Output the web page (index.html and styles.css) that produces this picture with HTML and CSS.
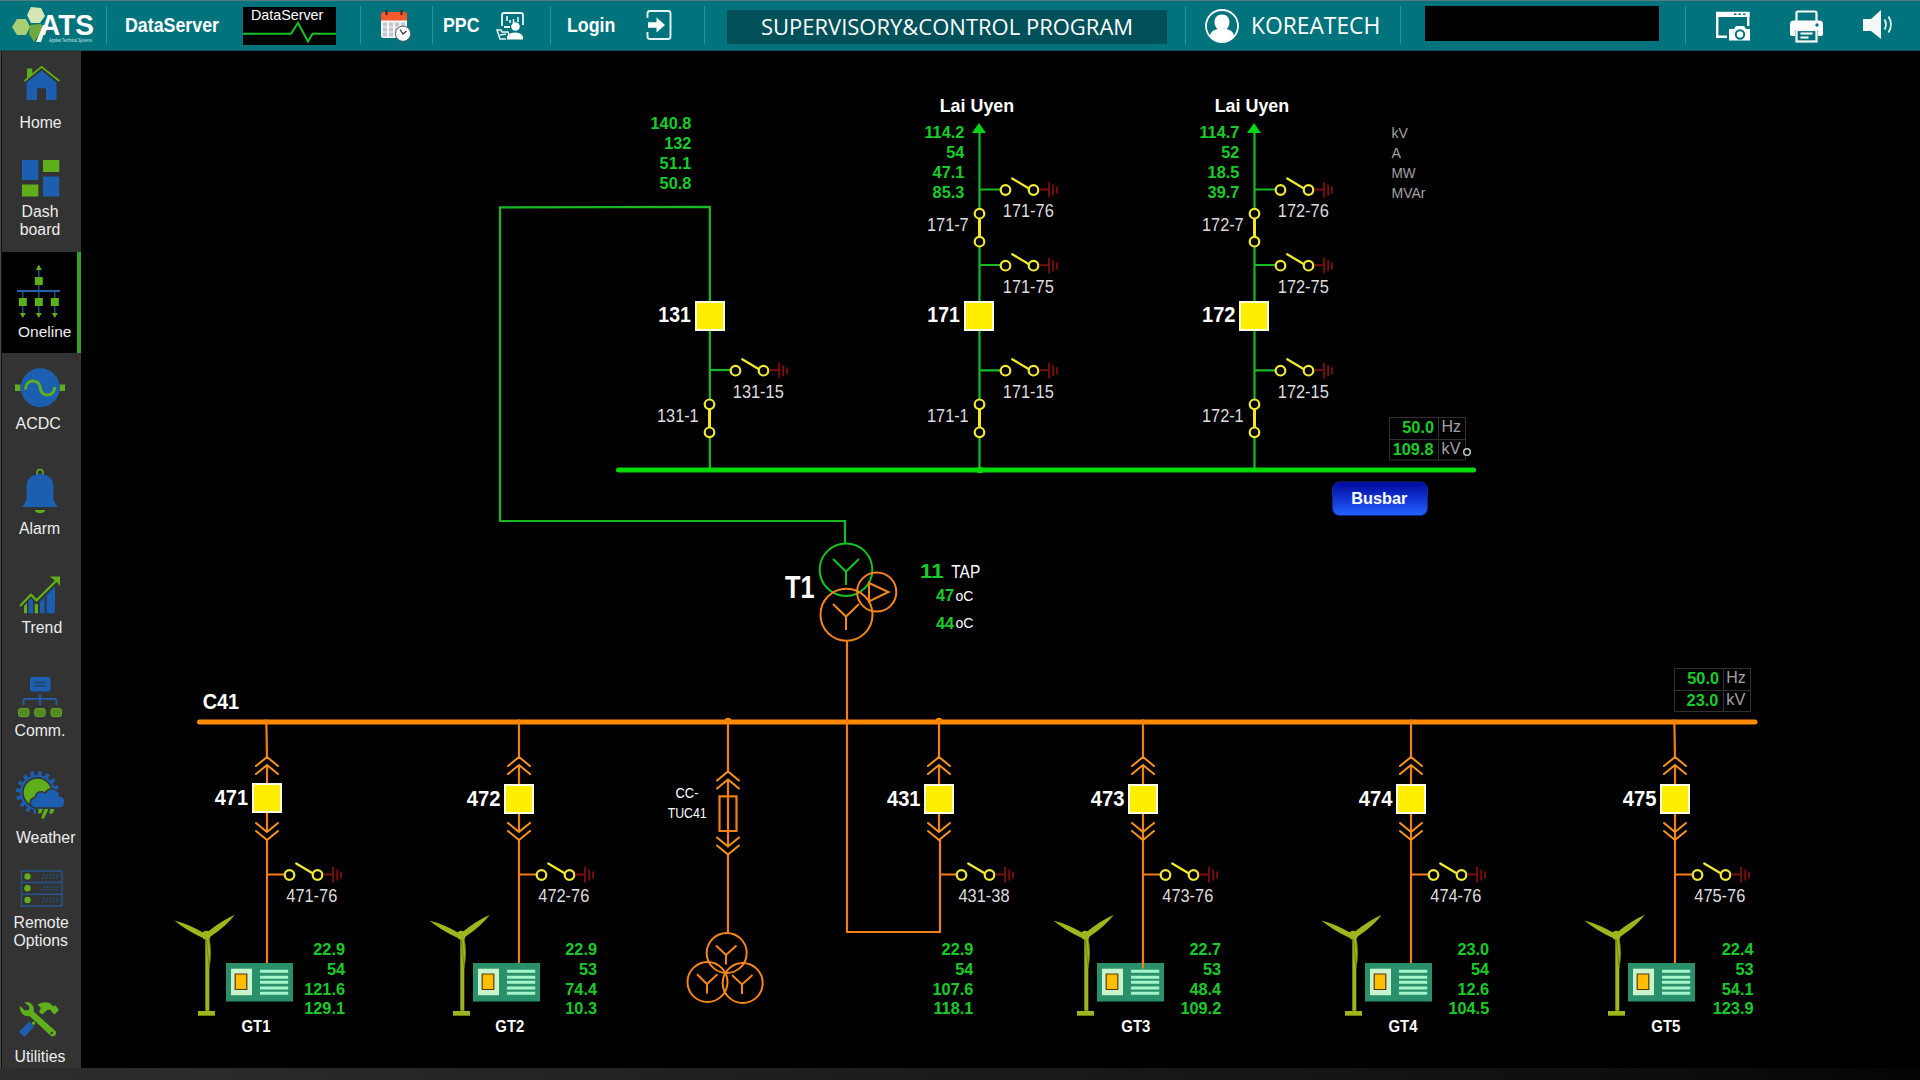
FILE: index.html
```html
<!DOCTYPE html>
<html lang="en">
<head>
<meta charset="utf-8">
<title>Supervisory &amp; Control Program</title>
<link rel="stylesheet" href="styles.css">
</head>
<body>
<header class="topbar">
  <div class="seg seg-logo">
    <svg width="106" height="49" viewBox="0 1 106 49">
      <path fill="#d3e8b4" d="M31 7l10 1 4 8-5 7-9 0-4-8z"/>
      <path fill="#a9cf74" d="M17 19l9 0 4 8-4 8-9 0-5-8z"/>
      <path fill="#6ea93d" d="M30 25l11-1 3 3-10 15-5-8z"/>
      <path fill="#eef7e4" d="M36 42l7-17 4 0-6 17z"/>
      <text class="logo-name" x="40" y="35.300" textLength="54" lengthAdjust="spacingAndGlyphs">ATS</text>
      <text class="logo-sub" x="49" y="42" textLength="43" lengthAdjust="spacingAndGlyphs">Applied Technical Systems</text>
    </svg>
  </div>
  <div class="seg seg-data">
    <span class="label">DataServer</span>
    <div class="monitor">
      <span>DataServer</span>
      <svg width="93" height="22" viewBox="243 22 93 22"><path class="pulse" d="M243 33.700H291L298 23 308 41.500 312.600 33.700H336"/></svg>
    </div>
  </div>
  <div class="seg seg-cal">
    <svg width="32" height="34" viewBox="380 9 32 34">
      <rect x="381" y="13" width="26" height="25" rx="2" fill="#f4f4f6"/>
      <path fill="#f4592d" d="M381 20.500V14q0-2 2-2h22q2 0 2 2v6.500z"/>
      <path stroke="#3a2b2b" stroke-width="2" d="M386.500 10v5M401.500 10v5"/>
      <path stroke="#c3c5cf" stroke-width="3.800" stroke-dasharray="4 2" d="M383 24.500h22M383 29.500h22M383 34.500h22"/>
      <circle cx="403" cy="33.700" r="7.600" fill="#fff" stroke="#555b66" stroke-width="1"/>
      <path fill="none" stroke="#333" stroke-width="1.300" d="M400 29.500l3 4.500 3.500-3"/>
    </svg>
  </div>
  <div class="seg seg-ppc">
    <span class="label">PPC</span>
    <svg width="30" height="30" viewBox="495 11 30 30">
      <path fill="none" stroke="#e9f6f6" stroke-width="1.800" d="M502 26V15q0-2 2-2h17q2 0 2 2v10M504 27h6"/>
      <path stroke="#e9f6f6" stroke-width="1.600" d="M507 16v5M510 20v3M513.500 19v4M518 17v5"/>
      <circle cx="515.500" cy="26.500" r="4.300" fill="#fff"/>
      <path fill="#fff" d="M507 39.500v-3q2-4 8-4t8 4v3z"/>
      <path fill="none" stroke="#e9f6f6" stroke-width="1.500" d="M506 39h-6l-3-9h4l1 2h6l2 6M500 35l6-1"/>
    </svg>
  </div>
  <div class="seg seg-login">
    <span class="label">Login</span>
    <svg width="26" height="32" viewBox="646 9 26 32">
      <path fill="none" stroke="#e6f4f4" stroke-width="1.900" d="M647.500 18v-4.500q0-2.500 2.500-2.500h18q2.500 0 2.500 2.500v23q0 2.500-2.500 2.500h-18q-2.500 0-2.500-2.500V32"/>
      <path fill="#fff" d="M648 22.300h8.500V17.500l8.500 7.500-8.500 7.500v-4.800H648z"/>
    </svg>
  </div>
  <div class="seg seg-title"><div class="title"><span>SUPERVISORY&amp;CONTROL PROGRAM</span></div></div>
  <div class="seg seg-user">
    <svg width="36" height="36" viewBox="1204 8 36 36">
      <circle cx="1222" cy="26" r="16" fill="none" stroke="#fff" stroke-width="1.800"/>
      <path fill="#fff" d="M1222 14.500c5 0 7.500 3.500 7.500 7.500 0 3-1.300 5.500-3 7 4 1 7 3 7.500 6.500-2.500 4-7 6.500-12 6.500s-9.500-2.500-12-6.500c.5-3.500 3.500-5.500 7.500-6.500-1.700-1.500-3-4-3-7 0-4 2.500-7.500 7.500-7.500z"/>
    </svg>
    <span class="user">KOREATECH</span>
  </div>
  <div class="seg seg-box"><div class="blank"></div></div>
  <div class="seg seg-tools">
    <svg width="36" height="32" viewBox="1715 10 36 32">
      <path fill="none" stroke="#fff" stroke-width="2.400" d="M1727 36.800h-9.800V13h31v13"/>
      <path fill="#fff" d="M1716 12h33.500v5H1716z"/>
      <path stroke="#00707a" stroke-width="1.500" d="M1734 14.300h2.500M1738.500 14.300h2.500M1743 14.300h2.500"/>
      <path fill="#fff" d="M1729 29h5l2-3h8l2 3h4v11.500H1729z"/>
      <circle cx="1740" cy="34.500" r="4.200" fill="#fff" stroke="#00707a" stroke-width="2"/>
    </svg>
    <svg width="34" height="34" viewBox="1789.500 9 34 34">
      <path fill="none" stroke="#fff" stroke-width="2.200" d="M1796 20v-8q0-1.500 1.500-1.500h17q1.500 0 1.500 1.500V20"/>
      <path fill="#fff" d="M1793 19.500h26q3.500 0 3.500 3.500v10q0 2-2 2h-3v-6h-23v6h-3q-2 0-2-2V23q0-3.500 3.500-3.500z"/>
      <rect x="1796" y="29" width="20" height="11.500" fill="#00707a" stroke="#fff" stroke-width="2.200"/>
      <path stroke="#fff" stroke-width="1.800" d="M1800 32.500h12M1800 36.500h8"/>
      <circle cx="1816.500" cy="24" r="1.700" fill="#00707a"/>
    </svg>
    <svg width="32" height="32" viewBox="1862 9 32 32">
      <path fill="#f2f8f8" d="M1863 18h8l10-9v29l-10-8h-8z"/>
      <path fill="none" stroke="#e5f3f3" stroke-width="1.800" d="M1884.500 18.500q3 5 0 10M1888.500 15.500q5 8 0 16"/>
    </svg>
  </div>
</header>

<div class="body">
<nav class="sidebar">
  <a class="item home">
    <svg width="79" height="63" viewBox="2 51 79 63">
      <path class="g" d="M27 68.500h5.300v6L27 78.500z"/>
      <path class="b" d="M41.500 70.500L56.500 82.500V100H46V88.300H37V100H26.500V82.500z"/>
      <path fill="none" stroke="#5fae1c" stroke-width="1.800" d="M24.300 81L41.500 66.800 59.300 81"/>
    </svg>
    <span>Home</span>
  </a>
  <a class="item dash">
    <svg width="79" height="72" viewBox="2 131 79 72">
      <path class="b" d="M22 160h16.300v20H22zM43 176.500h16.300v20H43z"/>
      <path class="g" d="M43 160h16.300v12H43zM22 184.500h16.300v12H22z"/>
    </svg>
    <span>Dash<br>board</span>
  </a>
  <a class="item oneline">
    <svg width="75" height="71" viewBox="2 252 75 71">
      <path fill="none" stroke="#2161ad" stroke-width="1.200" d="M38.800 268v23M22.800 291v24M38.800 291v24M54.800 291v24"/>
      <path fill="none" stroke="#2161ad" stroke-width="2.200" d="M17 291h43"/>
      <path class="g" d="M38.800 264.500l3 5.500h-6zM34.800 277h8v8h-8zM18.800 298h8v8h-8zM34.800 298h8v8h-8zM50.800 298h8v8h-8zM19.800 313h6l-3 5zM35.800 313h6l-3 5zM51.800 313h6l-3 5z"/>
    </svg>
    <span>Oneline</span>
  </a>
  <a class="item acdc">
    <svg width="79" height="62" viewBox="2 353 79 62">
      <path class="g" d="M15 384.500h5.500v6.500H15zM59.500 384.500H65v6.500h-5.500z"/>
      <circle class="b" cx="40.300" cy="387.700" r="19.500"/>
      <path fill="none" stroke="#5fae1c" stroke-width="3" d="M25.500 389.500c0-11 14-11 14.800-1.500s14 9.500 14.400-1"/>
    </svg>
    <span>ACDC</span>
  </a>
  <a class="item alarm">
    <svg width="79" height="87" viewBox="2 433 79 87">
      <circle cx="40" cy="472.500" r="3" fill="none" stroke="#5fae1c" stroke-width="1.600"/>
      <path class="b" d="M40 474c9 0 13.500 5.500 13.500 13v9.500c0 5 2 7.500 4.500 10.500H22c2.500-3 4.500-5.500 4.500-10.500V487c0-7.500 4.500-13 13.500-13z"/>
      <path class="g" d="M34.500 510h11q-2 3.200-5.500 3.200t-5.500-3.200z"/>
    </svg>
    <span>Alarm</span>
  </a>
  <a class="item trend">
    <svg width="79" height="81" viewBox="2 538 79 81">
      <path class="g" d="M24 606l3-3v10.300h-3zM34.700 603.500l3.300 1v8.800h-3.300z"/>
      <path class="b" d="M28.500 601l2.500-2.500 2 2v12.800h-4.500zM40 601.500l4.700-4.500v16.300H40zM46.500 595l8.500-8.500v26.800h-8.500z"/>
      <path fill="none" stroke="#5fae1c" stroke-width="2.300" d="M20 606l11-11.300 5.500 5.600L57 580"/>
      <path class="g" d="M49.500 576.500l10.500 0 0 9.500-3-3.500-3.500-3z"/>
    </svg>
    <span>Trend</span>
  </a>
  <a class="item comm">
    <svg width="79" height="85" viewBox="2 637 79 85">
      <rect class="b" x="30" y="677" width="20.500" height="14.500" rx="2"/>
      <path stroke="#24435f" stroke-width="1.300" d="M34.500 682.500h11M34.500 686h11"/>
      <path fill="none" stroke="#2161ad" stroke-width="1.700" d="M40 694.500v11M23.500 705v-4q0-2.200 2.200-2.200h28.600q2.200 0 2.200 2.200v4"/>
      <g fill="#548a22" stroke="#63a329"><rect x="18.500" y="708.500" width="10.500" height="8" rx="2"/><rect x="34.700" y="708.500" width="10.500" height="8" rx="2"/><rect x="51" y="708.500" width="10.500" height="8" rx="2"/></g>
    </svg>
    <span>Comm.</span>
  </a>
  <a class="item weather">
    <svg width="79" height="89" viewBox="2 740 79 89">
      <circle cx="37.500" cy="792.500" r="19.200" fill="none" stroke="#1c5fb0" stroke-width="4.500" stroke-dasharray="3.700 3.840"/>
      <circle cx="37.500" cy="792.500" r="17.600" class="b"/>
      <circle cx="37.500" cy="792.500" r="14.600" class="g" stroke="#333" stroke-width="1.600"/>
      <path class="b" stroke="#333" stroke-width="1.500" d="M36 808c-7 0-8-9-1-10.500 1-6 7-7 10-4.500 5-8 15-3 14.500 3 7.500 0 7 12 0 12z"/>
      <path fill="#333" d="M36 809h28v12H36z"/>
      <path class="g" d="M38.500 809h4.500l-2 4.500h-2.800zM44.500 809h4l-4.500 9.500h-3zM50.500 809h4l-2 4.500h-3.500z"/>
    </svg>
    <span>Weather</span>
  </a>
  <a class="item remote">
    <svg width="79" height="67" viewBox="2 847 79 67">
      <path fill="none" stroke="#24558f" stroke-width="1.400" d="M21.500 871h40.500v35H21.500zM21.500 882.500h40.500M21.500 894.200h40.500"/>
      <path fill="none" stroke="#24558f" stroke-width="1.500" stroke-dasharray="1.700 1.800" d="M43 875h15.500M42 877.700h15.500M43 887h15.500M42 889.700h15.500M43 898.700h15.500M42 901.400h15.500"/>
      <g class="g"><circle cx="27.500" cy="876.500" r="3.200"/><circle cx="27.500" cy="888.200" r="3.200"/><circle cx="27.500" cy="900" r="3.200"/></g>
    </svg>
    <span>Remote<br>Options</span>
  </a>
  <a class="item util">
    <svg width="79" height="98" viewBox="2 950 79 98">
      <path class="b" d="M29 1021.500l5 5-9.500 10.500-5.500-5z"/>
      <path class="g" d="M31.500 1023.500l2-2.500 2 2-2 2.500zM37.500 1004.500q7-3.500 12-1.500l3.500 3 2.500-.5 3.500 4.500-4.500 4.500-3.500-3.500-.5-1.500-3 .5-5.500 4.500-3-2.500 2-4z"/>
      <path class="g" d="M24.500 1002.500q5-1.500 8 2.500 2 3 1 6.500l22 19.500q1.500 2.500-.5 4.500-2.500 2-4.500 0l-21-19.500q-4 1-7-2-3.500-3.500-2.500-8l5 4.500 4-.5 .5-3.500z"/>
      <circle cx="51.700" cy="1033" r="1.200" fill="#333"/>
    </svg>
    <span>Utilities</span>
  </a>
</nav>

<main class="canvas">
<svg width="1839" height="1017" viewBox="81 51 1839 1017">
  <defs>
    <linearGradient id="btn" x1="0" y1="0" x2="0" y2="1">
      <stop offset="0" stop-color="#00079c"/><stop offset=".45" stop-color="#1030cc"/><stop offset="1" stop-color="#2262ff"/>
    </linearGradient>
    <!-- open earthing switch, origin at the first contact -->
    <g id="earth">
      <g class="contact"><circle r="4.800"/><circle cx="28" r="4.800"/><path d="M6.700-11.500L23.500-1.500"/></g>
      <path class="ground" d="M33.500-.5H43.500M43.500-8V7.500M47.700-5.500V5.500M51.500-3.500V3.500"/>
    </g>
    <!-- closed isolator, origin at the upper contact -->
    <g id="isolator">
      <g class="contact"><circle r="4.800" fill="#000"/><circle cy="28" r="4.800" fill="#000"/></g>
      <path stroke="#f5e61e" stroke-width="3" d="M0 5V23"/>
    </g>
    <rect id="breaker" x="-14" y="1" width="28" height="28" fill="#ffee00" stroke="#fffbe0" stroke-width="2"/>
    <path id="up" class="chev" d="M-11 9L0 0 11 9M-11 17L0 8 11 17"/>
    <path id="down" class="chev" d="M-11 0L0 9 11 0M-11 8L0 17 11 8"/>
    <path id="wye" fill="none" d="M-13-12.500L0 0 13-12.500M0 0V13.500"/>
    <g id="turbine" fill="#a0b41b">
      <path d="M-1 4h4v71.500h-4z"/><path d="M-8.300 75.700H8.700v4.700H-8.300z"/>
      <path d="M-32-14.800Q-17-11-2-2L-4 2.500Q-20-5-32-14.800z"/>
      <path d="M28.500-20.500Q14-14 1-3L4 1.500Q20-9 28.500-20.500z"/>
      <path stroke="#59650c" stroke-width=".6" d="M0 3L3 33Q6 17 3 3z"/>
      <circle r="4.500"/>
    </g>
    <g id="inverter">
      <path fill="#2a8f6b" d="M0 0h67v38.500H0z"/>
      <path fill="#c9f5cd" d="M5 5.700h21v26.500H5z"/>
      <path fill="#ffbe00" stroke="#5a3510" stroke-width="1.200" d="M9.200 11h11.600v15.500H9.200z"/>
      <path stroke="#a5f5cb" stroke-width="3" d="M34 8.300h28.200M34 14.300h28.200M34 19.300h28.200M34 25h28.200M34 30.300h28.200"/>
    </g>
  </defs>

  <!-- 110 kV side -->
  <g class="wire green">
    <path d="M709.800 470V206.800L500 207.300V521H845V544"/>
    <path d="M709.800 370H731"/>
    <path d="M979.500 131V470M980 189.500h21M980 265h21M980 370.300h21"/>
    <path d="M1254.500 131V470M1255 189.500h21M1255 265h21M1255 370.300h21"/>
  </g>
  <path fill="#00d414" d="M979 123l7 10h-14zM1254 123l7 10h-14z"/>
  <path class="bus" stroke="#00d908" d="M618.500 470H1473.500"/>
  <circle cx="980" cy="470" r="3.300" fill="#00d908"/>
  <use href="#breaker" x="710" y="301"/><use href="#breaker" x="979" y="301"/><use href="#breaker" x="1254" y="301"/>
  <use href="#earth" x="735.500" y="370.700"/>
  <use href="#earth" x="1005.500" y="190"/><use href="#earth" x="1005.500" y="265.700"/><use href="#earth" x="1005.500" y="370.700"/>
  <use href="#earth" x="1280.500" y="190"/><use href="#earth" x="1280.500" y="265.700"/><use href="#earth" x="1280.500" y="370.700"/>
  <use href="#isolator" x="709.500" y="404.300"/>
  <use href="#isolator" x="979.500" y="213.700"/><use href="#isolator" x="979.500" y="404.300"/>
  <use href="#isolator" x="1254.500" y="213.700"/><use href="#isolator" x="1254.500" y="404.300"/>

  <g class="num">
    <text x="658.300" y="322.300" textLength="32.500" lengthAdjust="spacingAndGlyphs">131</text>
    <text x="927.300" y="322.300" textLength="32.500" lengthAdjust="spacingAndGlyphs">171</text>
    <text x="1202" y="322.300" textLength="33.500" lengthAdjust="spacingAndGlyphs">172</text>
    <text x="202.700" y="709.300" textLength="36.500" lengthAdjust="spacingAndGlyphs">C41</text>
    <text x="214.700" y="805" textLength="33.300" lengthAdjust="spacingAndGlyphs">471</text>
    <text x="466.700" y="805.700" textLength="33.700" lengthAdjust="spacingAndGlyphs">472</text>
    <text x="887" y="805.700" textLength="33.500" lengthAdjust="spacingAndGlyphs">431</text>
    <text x="1090.800" y="805.700" textLength="33.700" lengthAdjust="spacingAndGlyphs">473</text>
    <text x="1358.800" y="805.700" textLength="33.700" lengthAdjust="spacingAndGlyphs">474</text>
    <text x="1622.800" y="805.700" textLength="33.700" lengthAdjust="spacingAndGlyphs">475</text>
  </g>
  <g class="sw">
    <text x="732.800" y="397.700" textLength="51" lengthAdjust="spacingAndGlyphs">131-15</text>
    <text x="657" y="421.700" textLength="41.700" lengthAdjust="spacingAndGlyphs">131-1</text>
    <text x="1002.800" y="217" textLength="51" lengthAdjust="spacingAndGlyphs">171-76</text>
    <text x="927" y="231.300" textLength="41.700" lengthAdjust="spacingAndGlyphs">171-7</text>
    <text x="1002.800" y="292.700" textLength="51" lengthAdjust="spacingAndGlyphs">171-75</text>
    <text x="1002.800" y="397.700" textLength="51" lengthAdjust="spacingAndGlyphs">171-15</text>
    <text x="927" y="421.700" textLength="41.700" lengthAdjust="spacingAndGlyphs">171-1</text>
    <text x="1277.800" y="217" textLength="51" lengthAdjust="spacingAndGlyphs">172-76</text>
    <text x="1202" y="231.300" textLength="41.700" lengthAdjust="spacingAndGlyphs">172-7</text>
    <text x="1277.800" y="292.700" textLength="51" lengthAdjust="spacingAndGlyphs">172-75</text>
    <text x="1277.800" y="397.700" textLength="51" lengthAdjust="spacingAndGlyphs">172-15</text>
    <text x="1202" y="421.700" textLength="41.700" lengthAdjust="spacingAndGlyphs">172-1</text>
    <text x="286.300" y="902.300" textLength="51" lengthAdjust="spacingAndGlyphs">471-76</text>
    <text x="538.300" y="902.300" textLength="51" lengthAdjust="spacingAndGlyphs">472-76</text>
    <text x="958.500" y="902.300" textLength="51" lengthAdjust="spacingAndGlyphs">431-38</text>
    <text x="1162.300" y="902.300" textLength="51" lengthAdjust="spacingAndGlyphs">473-76</text>
    <text x="1430.300" y="902.300" textLength="51" lengthAdjust="spacingAndGlyphs">474-76</text>
    <text x="1694.300" y="902.300" textLength="51" lengthAdjust="spacingAndGlyphs">475-76</text>
  </g>
  <g class="station">
    <text x="939.700" y="112" textLength="74.500" lengthAdjust="spacingAndGlyphs">Lai Uyen</text>
    <text x="1214.700" y="112" textLength="74.500" lengthAdjust="spacingAndGlyphs">Lai Uyen</text>
  </g>
  <g class="val">
    <text x="691.300" y="129">140.8</text><text x="691.300" y="149">132</text><text x="691.300" y="169">51.1</text><text x="691.300" y="188.700">50.8</text>
    <text x="964.300" y="138.300">114.2</text><text x="964.300" y="158.300">54</text><text x="964.300" y="178">47.1</text><text x="964.300" y="197.700">85.3</text>
    <text x="1239.300" y="138.300">114.7</text><text x="1239.300" y="158.300">52</text><text x="1239.300" y="178">18.5</text><text x="1239.300" y="197.700">39.7</text>
    <text x="1434" y="433">50.0</text><text x="1433.500" y="455">109.8</text>
    <text x="1719" y="683.500">50.0</text><text x="1718.300" y="705.500">23.0</text>
    <text x="954" y="601.300">47</text><text x="954" y="628.500">44</text>
    <text x="345" y="954.700">22.9</text><text x="345" y="974.500">54</text><text x="345" y="994.500">121.6</text><text x="345" y="1014.300">129.1</text>
    <text x="597" y="954.700">22.9</text><text x="597" y="974.500">53</text><text x="597" y="994.500">74.4</text><text x="597" y="1014.300">10.3</text>
    <text x="973.300" y="954.700">22.9</text><text x="973.300" y="974.500">54</text><text x="973.300" y="994.500">107.6</text><text x="973.300" y="1014.300">118.1</text>
    <text x="1221.200" y="954.700">22.7</text><text x="1221.200" y="974.500">53</text><text x="1221.200" y="994.500">48.4</text><text x="1221.200" y="1014.300">109.2</text>
    <text x="1489.200" y="954.700">23.0</text><text x="1489.200" y="974.500">54</text><text x="1489.200" y="994.500">12.6</text><text x="1489.200" y="1014.300">104.5</text>
    <text x="1753.500" y="954.700">22.4</text><text x="1753.500" y="974.500">53</text><text x="1753.500" y="994.500">54.1</text><text x="1753.500" y="1014.300">123.9</text>
    <text class="tap" x="943.500" y="578" textLength="23.500" lengthAdjust="spacingAndGlyphs">11</text>
  </g>
  <g class="unit">
    <text x="1391.500" y="138" textLength="16.500" lengthAdjust="spacingAndGlyphs">kV</text>
    <text x="1391.500" y="158" textLength="9.500" lengthAdjust="spacingAndGlyphs">A</text>
    <text x="1391.500" y="178" textLength="24" lengthAdjust="spacingAndGlyphs">MW</text>
    <text x="1391.500" y="197.700" textLength="34" lengthAdjust="spacingAndGlyphs">MVAr</text>
    <text class="lg" x="1441.500" y="431.500" textLength="19.500" lengthAdjust="spacingAndGlyphs">Hz</text>
    <text class="lg" x="1441.500" y="453.500" textLength="19" lengthAdjust="spacingAndGlyphs">kV</text>
    <text class="lg" x="1726.300" y="682.500" textLength="19.500" lengthAdjust="spacingAndGlyphs">Hz</text>
    <text class="lg" x="1726.300" y="704.500" textLength="19" lengthAdjust="spacingAndGlyphs">kV</text>
  </g>
  <path class="frame" d="M1389.500 417.500h76v42.500h-76zM1389.500 439.500h76M1438.500 417.500v42.500"/>
  <path class="frame" d="M1674.500 668.500h76v43h-76zM1674.500 690.500h76M1723.500 668.500v43"/>
  <circle cx="1467" cy="452" r="3.300" fill="#000" stroke="#c9c9c9" stroke-width="1.500"/>
  <g>
    <rect x="1332.500" y="482" width="95" height="33.500" rx="7" fill="url(#btn)" stroke="#0c2a8c"/>
    <text class="btn-text" x="1379.300" y="503.500">Busbar</text>
  </g>

  <!-- transformer T1 -->
  <g fill="none" stroke-width="2">
    <circle cx="846" cy="569.700" r="26.300" stroke="#14c41f"/>
    <circle cx="846.500" cy="614.700" r="26" stroke="#f5861a"/>
    <circle cx="876.700" cy="592" r="19.600" stroke="#f5861a"/>
    <path stroke="#f5861a" d="M869 583l19.500 9-19.500 9.500z"/>
  </g>
  <use href="#wye" x="846" y="571.500" stroke="#14c41f" stroke-width="2"/>
  <use href="#wye" x="846" y="616.500" stroke="#f5861a" stroke-width="2"/>
  <text class="t1" x="785" y="598" textLength="29.500" lengthAdjust="spacingAndGlyphs">T1</text>
  <g class="temp">
    <text class="taplabel" x="951.300" y="577.700" textLength="29" lengthAdjust="spacingAndGlyphs">TAP</text>
    <text x="955.500" y="600.700" textLength="18" lengthAdjust="spacingAndGlyphs">oC</text>
    <text x="955.500" y="628.300" textLength="18" lengthAdjust="spacingAndGlyphs">oC</text>
    <text x="675.500" y="797.700" textLength="23" lengthAdjust="spacingAndGlyphs">CC-</text>
    <text x="667.700" y="817.700" textLength="39" lengthAdjust="spacingAndGlyphs">TUC41</text>
  </g>

  <!-- 22 kV side -->
  <path class="bus" stroke="#ff8a00" d="M199.500 722H1755"/>
  <g fill="#ff8a00"><circle cx="728" cy="721" r="3.300"/><circle cx="939" cy="721" r="3.300"/></g>
  <g class="wire orange">
    <path d="M847 641V932H940V840"/>
    <path d="M266.300 719.500L267 757M267 765V832M267 840V963M267 874.500H284.500"/>
    <path d="M519 719.500V757M519 765V832M519 840V963M519 874.500H536.500"/>
    <path d="M728 719V771.500M728 779.500V846M728 854V932.500"/>
    <path d="M939 719.500V757M939 765V832M939.300 874.500H956.500"/>
    <path d="M1143 719.500V757M1143 765V963M1143 874.500H1160.500"/>
    <path d="M1411 719.500V757M1411 765V963M1411 874.500H1428.500"/>
    <path d="M1674.300 719.500L1675 757M1675 765V963M1675 874.500H1692.500"/>
    <path d="M719.500 796.300H736.500V831H719.500z"/>
  </g>
  <use href="#up" x="267" y="757"/><use href="#up" x="519" y="757"/><use href="#up" x="728" y="771.500"/><use href="#up" x="939" y="757"/><use href="#up" x="1143" y="757"/><use href="#up" x="1411" y="757"/><use href="#up" x="1675" y="757"/>
  <use href="#down" x="267" y="823"/><use href="#down" x="519" y="823"/><use href="#down" x="728" y="837.500"/><use href="#down" x="939" y="823"/><use href="#down" x="1143" y="823"/><use href="#down" x="1411" y="823"/><use href="#down" x="1675" y="823"/>
  <use href="#breaker" x="267" y="783"/><use href="#breaker" x="519" y="784"/><use href="#breaker" x="939" y="784"/><use href="#breaker" x="1143" y="784"/><use href="#breaker" x="1411" y="784"/><use href="#breaker" x="1675" y="784"/>
  <use href="#earth" x="289.500" y="875"/><use href="#earth" x="541.500" y="875"/><use href="#earth" x="961.500" y="875"/><use href="#earth" x="1165.500" y="875"/><use href="#earth" x="1433.500" y="875"/><use href="#earth" x="1697.500" y="875"/>

  <g fill="none" stroke="#f5861a" stroke-width="2">
    <circle cx="726.700" cy="953" r="20"/><circle cx="707.500" cy="982" r="20"/><circle cx="742.700" cy="983" r="20"/>
    <path d="M716 945.500l10 9.500 10.500-9.500M726 955v9.500M697 974.300l10 9.700 10.500-9.700M707 984v9.500M732 975l10 9.500 10.500-9.500M742 984.500v9.500"/>
  </g>

  <use href="#turbine" x="206.300" y="935.300"/><use href="#turbine" x="461.300" y="935.300"/><use href="#turbine" x="1085.300" y="935.300"/><use href="#turbine" x="1353.300" y="935.300"/><use href="#turbine" x="1616.300" y="935.300"/>
  <use href="#inverter" x="226" y="963"/><use href="#inverter" x="473" y="963"/><use href="#inverter" x="1097" y="963"/><use href="#inverter" x="1365" y="963"/><use href="#inverter" x="1628" y="963"/>
  <path class="wire orange" d="M1143 960V968.500"/>
  <g class="gt">
    <text x="241.500" y="1032" textLength="29" lengthAdjust="spacingAndGlyphs">GT1</text>
    <text x="495.300" y="1032" textLength="29" lengthAdjust="spacingAndGlyphs">GT2</text>
    <text x="1121.300" y="1032" textLength="29" lengthAdjust="spacingAndGlyphs">GT3</text>
    <text x="1388.500" y="1032" textLength="29" lengthAdjust="spacingAndGlyphs">GT4</text>
    <text x="1651.300" y="1032" textLength="29" lengthAdjust="spacingAndGlyphs">GT5</text>
  </g>
</svg>
</main>
</div>
<footer class="foot"></footer>
</body>
</html>
```
FILE: styles.css
```css
* { box-sizing: border-box; }
body {
  margin: 0;
  width: 1920px;
  height: 1080px;
  overflow: hidden;
  display: flex;
  flex-direction: column;
  background: #000;
  color: #fff;
  font-family: "Liberation Sans", Arial, sans-serif;
}
svg { display: block; flex: none; overflow: visible; }

/* top bar */
.topbar {
  display: flex;
  height: 51px;
  flex: none;
  background: #00737d;
  border-top: 1px solid #56797c;
  border-bottom: 1px solid #0f5358;
}
.seg { position: relative; display: flex; align-items: flex-start; flex: none; }
.seg + .seg { background: linear-gradient(#0f99a0, #0f99a0) 0 5px / 1px 39px no-repeat; }
.seg-logo { width: 106px; }
.seg-data { width: 254px; padding: 6px 0 0 19px; }
.seg-cal { width: 72px; padding: 8px 0 0 20px; }
.seg-ppc { width: 118px; padding: 10px 0 0 11px; }
.seg-login { width: 154px; padding: 8px 0 0 16px; }
.seg-title { width: 481px; padding: 9px 0 0 23px; }
.seg-user { width: 215px; padding: 7px 0 0 19px; }
.seg-box { width: 285px; padding: 5px 0 0 25px; }
.seg-tools { width: 235px; padding: 9px 0 0 30px; }

.label {
  font-weight: bold;
  font-size: 20px;
  line-height: 24px;
  transform: scaleX(.89);
  transform-origin: 0 0;
  white-space: nowrap;
}
.seg-data .label { width: 118px; margin-top: 6px; }
.seg-ppc .label { width: 52px; margin-top: 2px; }
.seg-login .label { width: 79px; margin: 4px 0 0 1px; }
.monitor { width: 93px; height: 38px; background: #000; font-size: 14.300px; line-height: 16px; }
.monitor span { display: block; padding: 0 0 0 8px; }
.monitor svg { margin-top: -1px; }
.pulse { fill: none; stroke: #12c424; stroke-width: 2; }
.logo-name { font-weight: bold; font-size: 29px; fill: #fff; }
.logo-sub { font-size: 5px; fill: #cfe9ea; font-style: italic; }
.title {
  width: 440px;
  height: 34px;
  display: flex;
  justify-content: center;
  background: #00505a;
}
.title span { font: 22px/33px "Open Sans", "Noto Sans", sans-serif; white-space: nowrap; }
.user { font: 22.800px/35px "Open Sans", "Noto Sans", sans-serif; margin-left: 11px; }
.blank { width: 234px; height: 35px; background: #000; }
.seg-tools svg + svg { margin-left: 38.500px; }

/* sidebar */
.body { display: flex; flex: none; height: 1017px; }
.sidebar {
  width: 81px;
  flex: none;
  padding-left: 2px;
  background: linear-gradient(90deg, #4a4a4a 1px, #111 1px, #111 2px, #333 2px);
}
.item { display: flex; flex-direction: column; font-size: 15.800px; line-height: 18px; color: #ededed; }
.g { fill: #5fae1c; }
.b { fill: #1c5fb0; }
.home { height: 80px; }
.home span { padding-left: 17.500px; margin-bottom: -1px; }
.dash { height: 121px; }
.dash span { width: 42px; margin-left: 17px; text-align: center; }
.oneline { height: 101px; background: #000; border-right: 4px solid #33a02c; }
.oneline span { padding-left: 16px; font-size: 15.500px; }
.acdc { height: 80px; }
.acdc span { padding-left: 13.500px; font-size: 16px; }
.alarm { height: 105px; }
.alarm span { padding-left: 17px; }
.trend { height: 99px; }
.trend span { padding-left: 19.500px; }
.comm { height: 103px; }
.comm span { padding-left: 12.500px; }
.weather { height: 107px; }
.weather span { padding-left: 14px; }
.remote { height: 103px; }
.remote span { padding-left: 11.500px; }
.util span { padding-left: 12.500px; }

/* one-line diagram */
.canvas { width: 1839px; flex: none; }
.canvas text { fill: #fff; }
.canvas .wire { fill: none; stroke-width: 2.200; }
.canvas .green { stroke: #18b925; }
.canvas .orange { stroke: #f07f14; }
.bus { stroke-width: 5; stroke-linecap: round; }
.contact { fill: none; stroke: #f2ea30; stroke-width: 2.200; stroke-linecap: round; }
.ground { fill: none; stroke: #7d0f0c; stroke-width: 1.800; }
.chev { fill: none; stroke: #f79420; stroke-width: 2; stroke-linecap: round; }
.frame { fill: none; stroke: #303030; stroke-width: 1; }
.num { font-weight: bold; font-size: 22.500px; }
.sw { font-size: 17.700px; }
.canvas .sw text { fill: #dedede; }
.station { font-weight: bold; font-size: 19px; }
.val { font-weight: bold; font-size: 16.300px; text-anchor: end; }
.canvas .val text { fill: #18cb28; }
.tap { font-size: 20.500px; }
.unit { font-size: 15px; }
.canvas .unit text { fill: #a3a3a3; }
.unit .lg { font-size: 16px; }
.btn-text { font-weight: bold; font-size: 16.300px; text-anchor: middle; }
.t1 { font-weight: bold; font-size: 31px; }
.temp { font-size: 15.500px; }
.taplabel { font-size: 18px; }
.gt { font-weight: bold; font-size: 17px; }

.foot { height: 12px; flex: none; background: linear-gradient(90deg, #2f2e2e, #1b1b1b 50%, #0c0c0c 90%, #040404); }
```
